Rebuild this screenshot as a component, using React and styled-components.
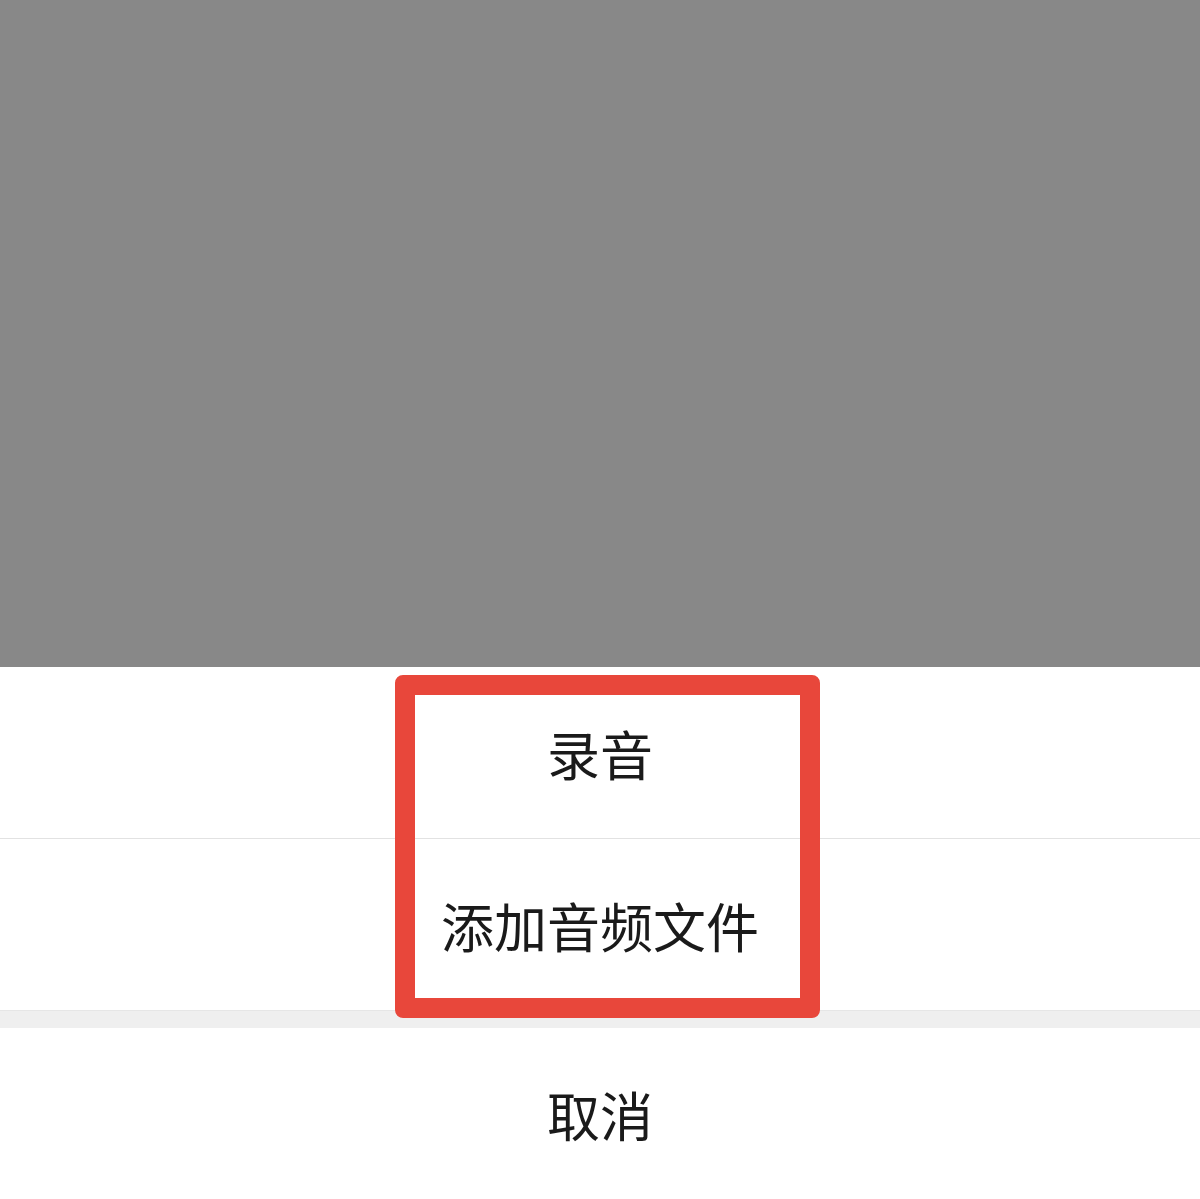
import React from "react";
import styled, { createGlobalStyle } from "styled-components";

const GlobalStyle = createGlobalStyle`
  html, body {
    margin: 0;
    padding: 0;
    background: #ffffff;
  }
  body {
    font-family: "Noto Sans CJK SC", "Noto Sans", sans-serif;
  }
`;

const Page = styled.div`
  width: 1200px;
  height: 1199px;
  display: flex;
  flex-direction: column;
  overflow: hidden;
`;

// 반투명 마스크 영역
const Mask = styled.div`
  flex: 1;
  background: #888888;
`;

const Sheet = styled.div`
  position: relative;
  display: flex;
  flex-direction: column;
  background: #ffffff;
`;

const Item = styled.div`
  height: 171px;
  display: flex;
  align-items: center;
  justify-content: center;
  font-size: 53px;
  color: #1a1a1a;
  border-top: ${(p) => (p.divider ? "1px solid #e2e2e2" : "none")};
`;

// 취소 위 회색 간격
const Gap = styled.div`
  height: 18px;
  background: #efefef;
  border-top: 1px solid #e6e6e6;
  box-sizing: border-box;
`;

// 강조 표시 박스
const Highlight = styled.div`
  position: absolute;
  left: 395px;
  top: 8px;
  width: 425px;
  height: 343px;
  box-sizing: border-box;
  border: 20px solid #e8473b;
  border-radius: 8px;
  pointer-events: none;
`;

const App = () => {
  return (
    <React.Fragment>
      <GlobalStyle />
      <Page>
        <Mask />
        <Sheet>
          <Item>录音</Item>
          <Item divider>添加音频文件</Item>
          <Gap />
          <Item>取消</Item>
          <Highlight />
        </Sheet>
      </Page>
    </React.Fragment>
  );
};

export default App;
